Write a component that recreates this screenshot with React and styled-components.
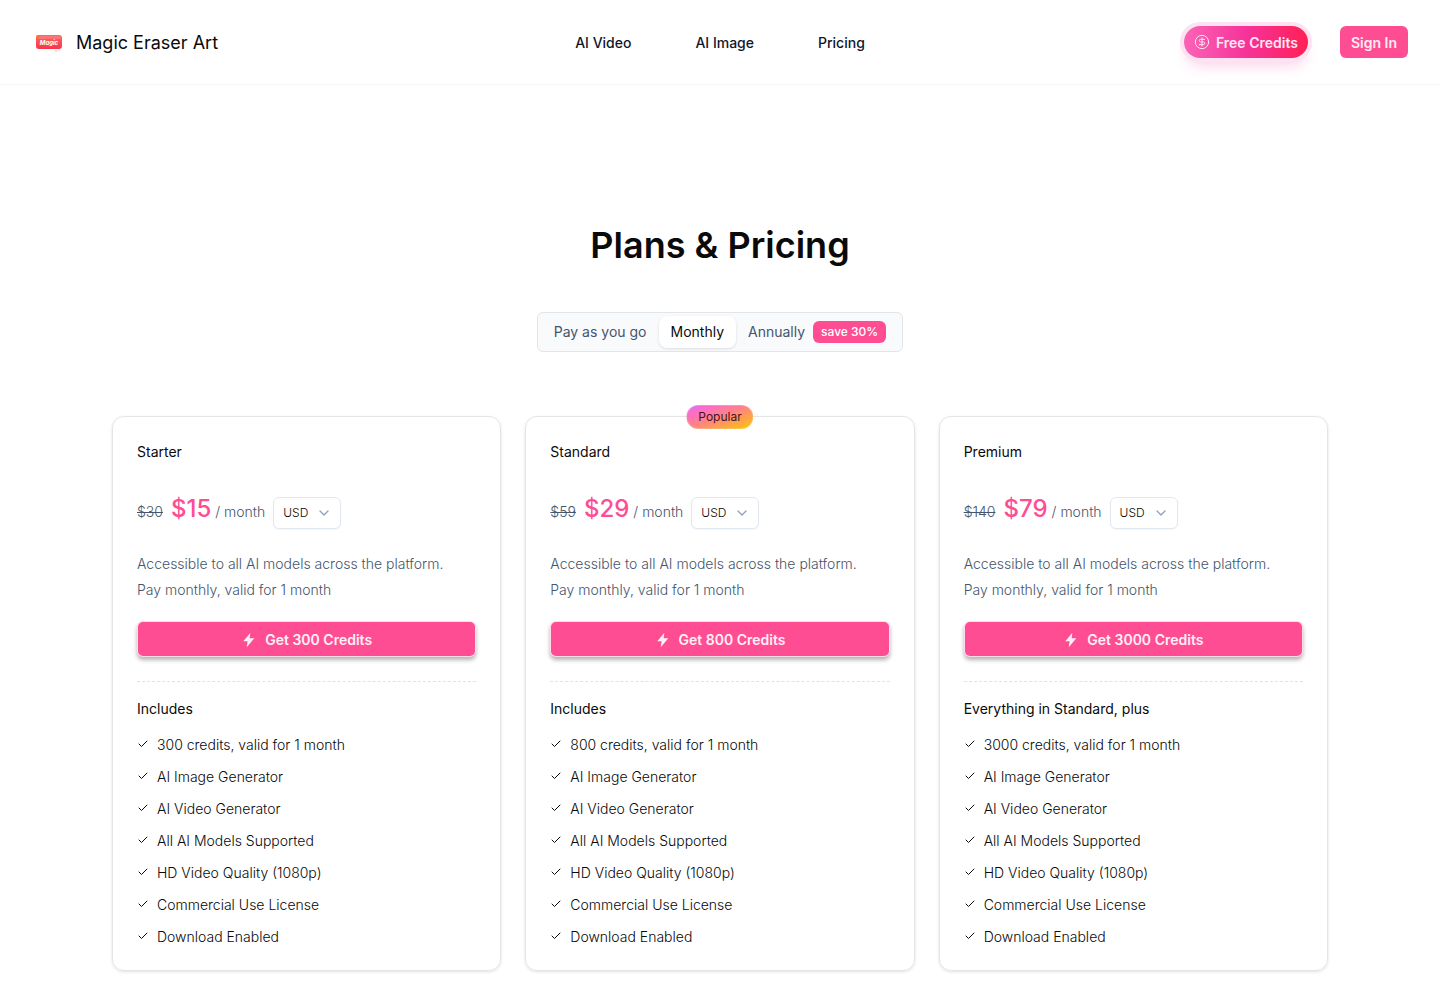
import React, { useState } from 'react';
import styled, { createGlobalStyle } from 'styled-components';
import { Check, ChevronDown, CircleDollarSign } from 'lucide-react';

const GlobalStyle = createGlobalStyle`
*{
  box-sizing:border-box;
  margin:0;
  padding:0;
}

body{
  background:#fff;
  color:#0a0a0a;
  font-family:Inter, "Liberation Sans", sans-serif;
  font-size:14px;
  line-height:20px;
}

button, select, input{
  font:inherit;
}

a{
  color:inherit;
  text-decoration:none;
}

ul{
  list-style:none;
}`

const Header = styled.header`
display:grid;
grid-template-columns:1fr auto 1fr;
align-items:center;
padding:26px 32px;
border-bottom:1px solid #f6f6f7;`

const Brand = styled.a`
display:flex;
align-items:center;
gap:12px;
padding-top:2px;
font-size:18px;
line-height:30px;`

const Nav = styled.nav`
display:flex;
gap:64px;
padding-top:2px;
color:#0f172b;
font-weight:500;`

const Actions = styled.div`
display:flex;
justify-content:flex-end;
gap:32px;`

const CreditsBtn = styled.button`
display:flex;
align-items:center;
gap:6px;
height:32px;
padding:2px 10px 0;
border:0;
border-radius:16px;
color:#ffe6f2;
font-weight:600;
background:linear-gradient(90deg, #fb64b6, #f6339a 50%, #ff2056);
box-shadow:0 0 0 4px #fde3f1, 0 10px 15px -3px #fccee8, 0 4px 6px -4px #fccee8;
cursor:pointer;

svg{
  margin-top:-2px;
}`

const SignInBtn = styled.button`
height:32px;
padding:2px 11px 0;
border:0;
border-radius:6px;
background:#ff4d94;
color:#ffeaf3;
font-weight:600;
cursor:pointer;`

const Main = styled.main`
display:flex;
flex-direction:column;
align-items:center;
padding:136px 32px 29px;`

const Title = styled.h1`
font-size:36px;
line-height:48px;
font-weight:600;`

const Periods = styled.fieldset`
display:flex;
margin-top:43px;
padding:3px 4px;
border:1px solid #e2e5e9;
border-radius:6px;
background:#f9fafc;`

const Period = styled.label`
display:flex;
align-items:center;
gap:8px;
height:32px;
padding:0 12px;
border-radius:8px;
color:#45556c;
cursor:pointer;

input{
  appearance:none;
}

&:has(input:checked){
  background:#fff;
  color:#0a0a0a;
  box-shadow:0 1px 3px rgba(0,0,0,0.12);
}`

const Save = styled.span`
padding:0 8px;
border-radius:6px;
background:#ff4d94;
color:#fff;
font-size:12px;
line-height:22px;
font-weight:500;`

const Plans = styled.section`
display:grid;
grid-template-columns:repeat(3, 1fr);
gap:24px;
width:100%;
max-width:1216px;
margin-top:64px;`

const Card = styled.article`
position:relative;
padding:24px;
border:1px solid #e5e5e5;
border-radius:12px;
box-shadow:0 1px 3px rgba(0,0,0,0.12);`

const Popular = styled.span`
position:absolute;
top:-12px;
left:50%;
transform:translateX(-50%);
padding:0 11px;
border:1px solid rgba(255,255,255,0.2);
border-radius:12px;
background:linear-gradient(to bottom right, #c27aff, #ff6bc8 20%, #ff8580 50%, #fdc700) border-box;
color:#461126;
font-size:12px;
line-height:22px;`

const PlanName = styled.h2`
font-size:14px;
line-height:22px;
font-weight:400;`

const Price = styled.div`
display:flex;
align-items:baseline;
gap:8px;
height:38px;
margin-top:26px;
color:#45556c;
font-weight:300;`

const Amount = styled.strong`
color:#ff4d94;
font-size:24px;
line-height:40px;
font-weight:500;
margin-right:-4px;`

const Currency = styled.span`
display:grid;
align-items:center;

svg{
  grid-area:1 / 1;
  justify-self:end;
  margin-right:9px;
  color:#90a1b9;
  pointer-events:none;
}`

const Select = styled.select`
grid-area:1 / 1;
appearance:none;
width:68px;
height:32px;
padding:0 9px;
border:1px solid #e2e8f0;
border-radius:6px;
background:#fff;
color:#0a0a0a;
font-size:12px;
box-shadow:0 1px 2px rgba(0,0,0,0.04);`

const Description = styled.p`
margin-top:24px;
color:#45556c;
font-weight:300;
line-height:26px;`

const GetBtn = styled.button`
display:flex;
align-items:center;
justify-content:center;
gap:8px;
width:100%;
height:36px;
margin-top:18px;
padding-top:1px;
border:1px solid rgba(255,255,255,0.8);
border-radius:6px;
background:#ff4d94;
color:#fff0f6;
font-weight:600;
box-shadow:0 3px 4px rgba(0,0,0,0.3);
cursor:pointer;`

const Includes = styled.div`
margin-top:24px;
padding-top:16px;
border-top:1px dashed #e2e2e2;`

const Features = styled.ul`
display:grid;
gap:12px;
margin-top:15px;
margin-bottom:-1px;`

const Feature = styled.li`
display:flex;
align-items:center;
gap:8px;
color:#0a0a0a;
font-weight:300;

svg{
  margin-top:-2px;
}`

const features = [
  'AI Image Generator',
  'AI Video Generator',
  'All AI Models Supported',
  'HD Video Quality (1080p)',
  'Commercial Use License',
  'Download Enabled',
]

const plans = [
  { name:'Starter', before:'$30', price:'$15', credits:300, includes:'Includes' },
  { name:'Standard', before:'$59', price:'$29', credits:800, includes:'Includes', popular:true },
  { name:'Premium', before:'$140', price:'$79', credits:3000, includes:'Everything in Standard, plus' },
]

const periods = [
  { id:'once', label:'Pay as you go' },
  { id:'monthly', label:'Monthly' },
  { id:'annually', label:'Annually', save:'save 30%' },
]

function Logo(){
  return(
    <svg width="32" height="30" viewBox="0 2 32 30" aria-hidden="true">
      <defs>
        <linearGradient id="eraser" x1="0" y1="0" x2="0" y2="1">
          <stop offset="0" stopColor="#f8686a"/>
          <stop offset="1" stopColor="#fa3349"/>
        </linearGradient>
      </defs>
      <rect x="4" y="9" width="26" height="14" rx="3" fill="url(#eraser)"/>
      <path d="M6 10h21q2 0 2 2v1H5z" fill="#ff8b85" opacity="0.5"/>
      <circle cx="6" cy="11" r="2" fill="#ff7043"/>
      <circle cx="24" cy="25" r="0.700" fill="#ff8e98"/>
      <circle cx="27" cy="24" r="0.700" fill="#ffb4ba"/>
      <text x="17" y="19" textAnchor="middle" fontSize="6" fontWeight="700" fontStyle="italic" fill="#fff">Magic</text>
    </svg>
  )
}

function Bolt(){
  return(
    <svg width="16" height="16" viewBox="0 0 24 24" fill="currentColor" aria-hidden="true">
      <path d="M14 1 3.500 14H10l-1.500 9L20 9.500h-7z"/>
    </svg>
  )
}

function PlanCard({ plan }){
  return(
    <Card>
      {plan.popular && <Popular>Popular</Popular>}
      <PlanName>{plan.name}</PlanName>
      <Price>
        <s>{plan.before}</s>
        <Amount>{plan.price}</Amount>
        <span>/ month</span>
        <Currency>
          <Select aria-label={`${plan.name} currency`} defaultValue="USD">
            <option>USD</option>
            <option>EUR</option>
          </Select>
          <ChevronDown size={16}/>
        </Currency>
      </Price>
      <Description>
        Accessible to all AI models across the platform.<br/>
        Pay monthly, valid for 1 month
      </Description>
      <GetBtn><Bolt/>Get {plan.credits} Credits</GetBtn>
      <Includes>
        <PlanName as="h3">{plan.includes}</PlanName>
        <Features>
          {[`${plan.credits} credits, valid for 1 month`, ...features].map((item) => (
            <Feature key={item}><Check size={12} strokeWidth={2}/>{item}</Feature>
          ))}
        </Features>
      </Includes>
    </Card>
  )
}

export default function App(){
  const [period, setPeriod] = useState('monthly')

  return(
    <>
      <GlobalStyle/>
      <Header>
        <Brand href="#"><Logo/>Magic Eraser Art</Brand>
        <Nav>
          <a href="#video">AI Video</a>
          <a href="#image">AI Image</a>
          <a href="#pricing">Pricing</a>
        </Nav>
        <Actions>
          <CreditsBtn><CircleDollarSign size={16} strokeWidth={1.5}/>Free Credits</CreditsBtn>
          <SignInBtn>Sign In</SignInBtn>
        </Actions>
      </Header>
      <Main>
        <Title>Plans &amp; Pricing</Title>
        <Periods aria-label="Billing period">
          {periods.map((item) => (
            <Period key={item.id}>
              <span>
                <input type="radio" name="period" checked={period === item.id} onChange={() => setPeriod(item.id)}/>
                {item.label}
              </span>
              {item.save && <Save>{item.save}</Save>}
            </Period>
          ))}
        </Periods>
        <Plans>
          {plans.map((plan) => <PlanCard key={plan.name} plan={plan}/>)}
        </Plans>
      </Main>
    </>
  )
}
